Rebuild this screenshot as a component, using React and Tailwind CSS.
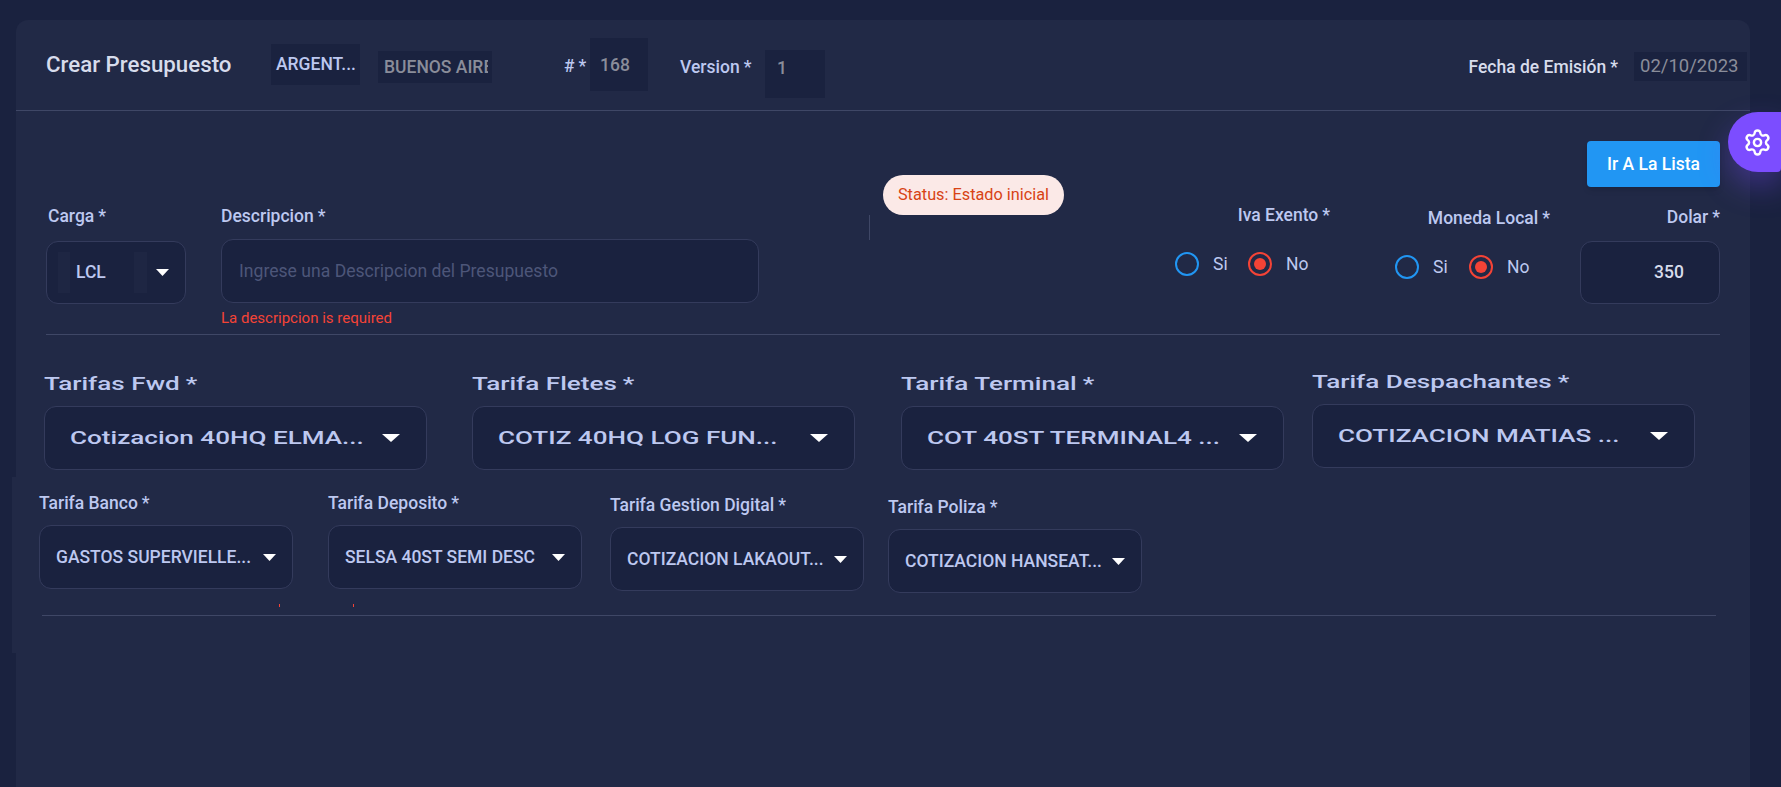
import React from 'react';
import { Settings } from 'lucide-react';

const Caret = ({ className }) => (
  <svg viewBox="0 0 10 5" preserveAspectRatio="none" className={className}>
    <polygon points="0,0 10,0 5,5" fill="#ffffff" />
  </svg>
);

const Req = ({ children }) => (
  <>
    {children}
    <span className="ml-[4px]">*</span>
  </>
);

const Radio = ({ label, checked, width }) => (
  <div className={`flex items-center ${width}`}>
    <span
      className={`w-6 h-6 rounded-full border-[2.5px] flex items-center justify-center ${
        checked ? 'border-[#f44336]' : 'border-[#2196f3]'
      }`}
    >
      {checked && <span className="w-3 h-3 rounded-full bg-[#f44336]" />}
    </span>
    <span className="ml-[14px] text-[17.5px] text-[#bdc8f0]">{label}</span>
  </div>
);

const wideTarifas = [
  { label: 'Tarifas Fwd', value: 'Cotizacion 40HQ ELMA...', box: 'ml-0 mt-[39px]' },
  { label: 'Tarifa Fletes', value: 'COTIZ 40HQ LOG FUN...', box: 'ml-[45px] mt-[39px]' },
  { label: 'Tarifa Terminal', value: 'COT 40ST TERMINAL4 ...', box: 'ml-[46px] mt-[39px]' },
  { label: 'Tarifa Despachantes', value: 'COTIZACION MATIAS ...', box: 'ml-[28px] mt-[37px]' },
];

const smallTarifas = [
  { label: 'Tarifa Banco', value: 'GASTOS SUPERVIELLE...', box: 'ml-0 mt-[16px]' },
  { label: 'Tarifa Deposito', value: 'SELSA 40ST SEMI DESC', box: 'ml-[35px] mt-[16px]' },
  { label: 'Tarifa Gestion Digital', value: 'COTIZACION LAKAOUT...', box: 'ml-[28px] mt-[18px]' },
  { label: 'Tarifa Poliza', value: 'COTIZACION HANSEAT...', box: 'ml-[24px] mt-[20px]' },
];

const App = () => {
  return (
    <div className="relative h-[787px] overflow-hidden bg-[#1a223f] pl-4 pt-5 font-['Roboto',sans-serif] text-[#bdc8f0]">
      <div className="w-[1734px] h-[767px] rounded-t-xl bg-[#212946]">
        {/* header */}
        <div className="h-[91px] flex items-start pl-[30px] border-b border-[#3f4766]">
          <h1 className="w-[225px] mt-[30px] text-[22.3px] leading-7 font-medium text-[#d7dcec] whitespace-nowrap">
            Crear Presupuesto
          </h1>
          <div className="w-[89px] h-[41px] mt-6 bg-[#1a223f] pl-[5px] flex items-center text-[17.5px] font-medium whitespace-nowrap">ARGENT...</div>
          <div className="w-[114px] h-8 mt-[31px] ml-[18px] bg-[#1a223f] pl-[6px] pr-[4px] flex items-center text-[17.5px] font-medium text-[#8a8d9a] overflow-hidden whitespace-nowrap">
            <span className="overflow-hidden">BUENOS AIRES</span>
          </div>
          <div className="w-[26px] mt-[36px] ml-[72px] text-[17.5px] font-medium leading-5 whitespace-nowrap"><Req>#</Req></div>
          <div className="w-[58px] h-[53px] mt-[18px] bg-[#1a223f] pl-[10px] pt-[15px] text-[17.5px] leading-6 font-medium text-[#8a8d9a]">168</div>
          <div className="w-[85px] mt-[37px] ml-8 text-[17.5px] font-medium leading-5 whitespace-nowrap"><Req>Version</Req></div>
          <div className="w-[60px] h-12 mt-[30px] bg-[#1a223f] pl-3 pt-[5px] text-[17.5px] font-medium text-[#8a8d9a]">1</div>
          <div className="ml-auto mt-[37px] text-[17.5px] font-medium leading-5 text-[#d7dcec]"><Req>Fecha de Emisión</Req></div>
          <div className="w-[113px] h-[29px] mt-8 ml-[16px] mr-[3px] bg-[#1a223f] pl-[6px] flex items-center text-[18.5px] text-[#8a8d9a]">02/10/2023</div>
        </div>

        {/* acciones */}
        <div className="flex justify-end pt-[30px] pr-[30px]">
          <button className="w-[133px] h-[46px] rounded bg-[#2196f3] text-white text-[17.5px] font-medium shadow-md">
            Ir A La Lista
          </button>
        </div>

        {/* datos generales */}
        <div className="flex items-start h-[159px] -mt-3 pl-[30px]">
          <div className="w-[140px] mt-[31px]">
            <div className="ml-[2px] text-[17.5px] leading-5 font-medium"><Req>Carga</Req></div>
            <div className="relative h-[63px] mt-[15px] rounded-xl border border-[#343b5c] bg-[#1a223f] flex items-center">
              <span className="w-3 h-[41px] ml-[11px] bg-[#212946]/60" />
              <span className="ml-[6px] w-[58px] text-[17.5px] font-medium">LCL</span>
              <span className="w-[13px] h-[41px] bg-[#212946]/60" />
              <Caret className="w-[13px] h-[7px] ml-[9px]" />
            </div>
          </div>
          <div className="w-[538px] ml-[35px] mt-[31px]">
            <div className="text-[17.5px] leading-5 font-medium"><Req>Descripcion</Req></div>
            <div className="h-16 mt-[13px] rounded-xl border border-[#343b5c] bg-[#1a223f] pl-[17px] flex items-center text-[17.6px] text-[#4d5679]">
              Ingrese una Descripcion del Presupuesto
            </div>
            <div className="mt-[7px] text-[15px] leading-4 text-[#f44336]">La descripcion is required</div>
          </div>
          <div className="w-px h-[25px] ml-[110px] mt-10 bg-[#3f4766]" />
          <div className="w-[181px] h-10 ml-[13px] rounded-full bg-[#fbe9e7] text-[#d84315] text-[16.3px] flex items-center justify-center">
            Status: Estado inicial
          </div>
          <div className="w-[155px] ml-[111px] mt-[30px]">
            <div className="text-right text-[17.5px] leading-5 font-medium"><Req>Iva Exento</Req></div>
            <div className="flex mt-[26px]">
              <Radio label="Si" width="w-[73px]" />
              <Radio label="No" checked />
            </div>
          </div>
          <div className="w-[155px] ml-[65px] mt-[33px]">
            <div className="text-right text-[17.5px] leading-5 font-medium whitespace-nowrap"><Req>Moneda Local</Req></div>
            <div className="flex mt-[26px]">
              <Radio label="Si" width="w-[74px]" />
              <Radio label="No" checked />
            </div>
          </div>
          <div className="w-[140px] ml-[30px] mt-8">
            <div className="text-right text-[17.5px] leading-5 font-medium"><Req>Dolar</Req></div>
            <div className="h-[63px] mt-[14px] rounded-xl border border-[#343b5c] bg-[#1a223f] pl-[73px] flex items-center text-[17.5px] font-medium text-[#d7dcec]">
              350
            </div>
          </div>
        </div>
        <div className="h-px w-[1674px] ml-[30px] bg-[#3f4766]" />

        {/* tarifas principales */}
        <div className="flex items-start h-[142px] pl-7">
          {wideTarifas.map((t) => (
            <div key={t.label} className={`w-[383px] ${t.box}`}>
              <div className="h-5 leading-5 text-[17.5px] font-medium whitespace-nowrap origin-left scale-x-[1.49]"><Req>{t.label}</Req></div>
              <div className="h-16 mt-3 rounded-xl border border-[#343b5c] bg-[#1a223f] flex items-center pl-[25px]">
                <span className="w-[309px] text-[17.5px] font-medium whitespace-nowrap origin-left scale-x-[1.49]">{t.value}</span>
                <Caret className="w-[18px] h-2 ml-[3px]" />
              </div>
            </div>
          ))}
        </div>

        {/* resto de tarifas */}
        <div className="h-[176px] -ml-1 bg-[#212946]">
          <div className="flex items-start h-[116px] pl-[27px]">
            {smallTarifas.map((t) => (
              <div key={t.label} className={`w-[254px] ${t.box}`}>
                <div className="h-5 leading-5 text-[17.5px] font-medium whitespace-nowrap"><Req>{t.label}</Req></div>
                <div className="h-16 mt-3 rounded-xl border border-[#343b5c] bg-[#1a223f] flex items-center pl-4">
                  <span className="w-[196px] text-[17.5px] font-medium whitespace-nowrap">{t.value}</span>
                  <Caret className="w-[13px] h-[7px] ml-[11px]" />
                </div>
              </div>
            ))}
          </div>
          <div className="flex h-[3px] mt-[11px] pl-[267px]">
            <span className="w-px h-[3px] bg-[#f44336]" />
            <span className="w-px h-[3px] ml-[73px] bg-[#f44336]" />
          </div>
          <div className="h-px w-[1674px] mt-[8px] ml-[30px] bg-[#3f4766]" />
        </div>
      </div>

      {/* boton flotante de ajustes */}
      <button className="absolute right-0 top-[112px] w-[53px] h-[60px] rounded-l-[30px] rounded-br-[4px] bg-[#7c4dff] text-white flex items-center justify-center shadow-[0_14px_30px_rgba(124,77,255,0.35)]">
        <Settings className="w-[29px] h-[29px] ml-[6px]" strokeWidth={2} />
      </button>
    </div>
  );
};

export default App;
